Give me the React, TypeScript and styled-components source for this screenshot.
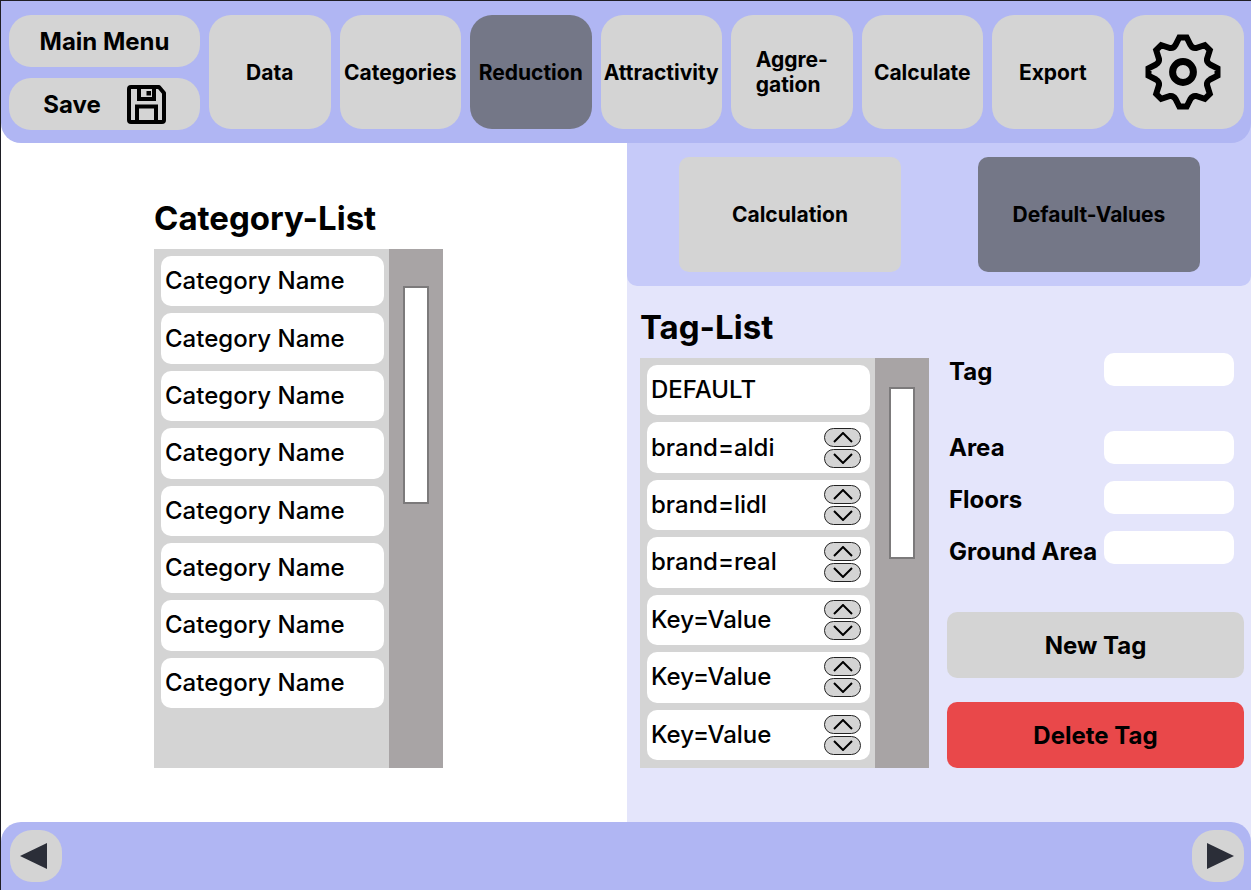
import React from 'react';
import styled, { createGlobalStyle } from 'styled-components';

const color = {
  bar: '#b0b6f3',
  subBar: '#c6caf9',
  panel: '#e4e5fb',
  button: '#d4d4d4',
  active: '#747787',
  track: '#a8a4a5',
  danger: '#e9484a',
  frame: '#1e1e24',
};

const GlobalStyle = createGlobalStyle`
  *, *::before, *::after { box-sizing: border-box; }
  body {
    margin: 0;
    font-family: Inter, "Liberation Sans", sans-serif;
    color: #000;
    background: #fff;
  }
  button, input { font: inherit; color: inherit; }
  h2, ul { margin: 0; padding: 0; }
`;

const Page = styled.div`
  display: flex;
  flex-direction: column;
  min-height: 100vh;
  border-top: 1px solid ${color.frame};
  border-left: 1px solid ${color.frame};
`;

const HeaderBack = styled.div`
  background: linear-gradient(90deg, #fff 50%, ${color.subBar} 50%);
`;

const Header = styled.header`
  display: flex;
  align-items: flex-start;
  gap: 9px;
  padding: 14px 7px 13px 8px;
  background: ${color.bar};
  border-radius: 0 0 20px 20px;
`;

const BaseButton = styled.button`
  display: flex;
  align-items: center;
  justify-content: center;
  padding: 0;
  border: 0;
  background: ${color.button};
  font-weight: 700;
  cursor: pointer;
`;

const FileActions = styled.div`
  display: flex;
  flex-direction: column;
  gap: 11px;
  width: 191px;
`;

const FileButton = styled(BaseButton)`
  gap: 26px;
  height: 52px;
  border-radius: 22px;
  font-size: 24px;
`;

const Tabs = styled.nav`
  display: flex;
  flex: 1;
  gap: 9px;
`;

const TabButton = styled(BaseButton)<{ $active?: boolean }>`
  flex: 1 1 0;
  min-width: 0;
  height: 114px;
  border-radius: 22px;
  background: ${(p) => (p.$active ? color.active : color.button)};
  font-size: 21px;
  line-height: 25px;
  text-align: left;
  white-space: pre;
`;

const Main = styled.main`
  display: grid;
  grid-template-columns: minmax(0, 313fr) minmax(0, 312fr);
  flex: 1;
`;

const CategoryPane = styled.section`
  padding: 55px 0 54px 153px;
`;

const TagPane = styled.section`
  display: flex;
  flex-direction: column;
  background: ${color.panel};
`;

const Title = styled.h2`
  font-size: 33px;
  line-height: 40px;
  font-weight: 700;
`;

const ListBox = styled.div<{ $height: number }>`
  display: flex;
  width: 289px;
  height: ${(p) => p.$height}px;
  margin-top: 11px;
  background: ${color.button};
`;

const Items = styled.ul<{ $spare: number }>`
  display: flex;
  flex: 1;
  flex-direction: column;
  gap: 7px;
  padding: 7px 5px ${(p) => p.$spare}px 7px;
  list-style: none;
`;

const Item = styled.li`
  display: flex;
  flex: 1;
  align-items: center;
  justify-content: space-between;
  padding: 0 9px 0 4px;
  background: #fff;
  border-radius: 10px;
  font-size: 24px;
  line-height: 30px;
  font-weight: 500;
`;

const Track = styled.div<{ $top: number }>`
  width: 54px;
  padding: ${(p) => p.$top}px 14px 0;
  background: ${color.track};
`;

const Thumb = styled.div<{ $height: number }>`
  height: ${(p) => p.$height}px;
  background: #fff;
  border: 2px solid #7c7a7b;
`;

const Stepper = styled.div`
  display: flex;
  flex-direction: column;
  gap: 2px;
`;

const StepButton = styled(BaseButton)`
  width: 37px;
  height: 19px;
  border: 1px solid #222;
  border-radius: 10px;
`;

const SubBar = styled.div`
  display: flex;
  justify-content: space-between;
  padding: 14px 51px 14px 52px;
  background: ${color.subBar};
  border-radius: 0 0 10px 10px;
`;

const SubButton = styled(BaseButton)<{ $active?: boolean }>`
  width: 222px;
  height: 115px;
  border-radius: 10px;
  background: ${(p) => (p.$active ? color.active : color.button)};
  font-size: 21px;
`;

const Editor = styled.div`
  display: flex;
  justify-content: space-between;
  padding: 21px 7px 54px 13px;
`;

const Details = styled.form`
  display: flex;
  flex-direction: column;
  justify-content: space-between;
  width: 297px;
  padding-top: 46px;
`;

const Fields = styled.div`
  display: flex;
  justify-content: space-between;
  padding: 0 10px 0 2px;
`;

const Labels = styled.div`
  display: flex;
  flex-direction: column;
  gap: 22px;
  padding-top: 4px;
`;

const Label = styled.label<{ $lead?: boolean }>`
  margin-bottom: ${(p) => (p.$lead ? 24 : 0)}px;
  font-size: 24px;
  line-height: 30px;
  font-weight: 700;
  white-space: nowrap;
`;

const Inputs = styled.div`
  display: flex;
  flex-direction: column;
  gap: 17px;
`;

const Input = styled.input<{ $lead?: boolean }>`
  width: 130px;
  height: 33px;
  margin-bottom: ${(p) => (p.$lead ? 28 : 0)}px;
  padding: 0 8px;
  border: 0;
  border-radius: 10px;
  background: #fff;
  font-size: 21px;
`;

const Actions = styled.div`
  display: flex;
  flex-direction: column;
  gap: 24px;
`;

const ActionButton = styled(BaseButton)<{ $danger?: boolean }>`
  height: 66px;
  border-radius: 10px;
  background: ${(p) => (p.$danger ? color.danger : color.button)};
  font-size: 24px;
`;

const FooterBack = styled.div`
  background: linear-gradient(90deg, #fff 50%, ${color.panel} 50%);
`;

const Footer = styled.footer`
  display: flex;
  justify-content: space-between;
  padding: 8px 7px 8px 9px;
  background: ${color.bar};
  border-radius: 20px 20px 0 0;
`;

const PageButton = styled(BaseButton)`
  width: 52px;
  height: 52px;
  border-radius: 22px;
`;

const SaveIcon = () => (
  <svg width="39" height="39" viewBox="0 0 39 39" fill="none" stroke="#000" strokeWidth="4" aria-hidden="true">
    <path d="M4 2H32L37 8V35a2 2 0 0 1-2 2H4a2 2 0 0 1-2-2V4a2 2 0 0 1 2-2Z" strokeLinejoin="round" />
    <path d="M12 2V14H27V2" />
    <path d="M10 37V21.500H29V37" />
    <rect x="19.500" y="6" width="4.500" height="4.500" fill="#000" stroke="none" />
  </svg>
);

const GearIcon = () => (
  <svg width="76" height="76" viewBox="-38 -38 76 76" fill="none" stroke="#000" aria-hidden="true">
    <path
      strokeWidth="6"
      d="M-3.700-34.500L-7.500-27Q-9.500-23.500-13-24L-21.800-26.800L-26.800-21.800L-24-13Q-23.500-9.500-27-7.500L-34.500-3.700L-34.500 3.700L-27 7.500Q-23.500 9.500-24 13L-26.800 21.800L-21.800 26.800L-13 24Q-9.500 23.500-7.500 27L-3.700 34.500L3.700 34.500L7.500 27Q9.500 23.500 13 24L21.800 26.800L26.800 21.800L24 13Q23.500 9.500 27 7.500L34.500 3.700L34.500-3.700L27-7.500Q23.500-9.500 24-13L26.800-21.800L21.800-26.800L13-24Q9.500-23.500 7.500-27L3.700-34.500Z"
    />
    <circle r="10.400" strokeWidth="7" />
  </svg>
);

const Chevron = ({ down }: { down?: boolean }) => (
  <svg width="20" height="11" viewBox="0 0 20 11" fill="none" stroke="#000" strokeWidth="2" aria-hidden="true">
    <path d={down ? 'M1 1L10 10L19 1' : 'M1 10L10 1L19 10'} />
  </svg>
);

const Triangle = ({ right }: { right?: boolean }) => (
  <svg width="32" height="26" viewBox="0 0 32 26" fill="#2b2e38" aria-hidden="true">
    <path d={right ? 'M5 0V26L32 13Z' : 'M27 0V26L0 13Z'} />
  </svg>
);

const tabs = ['Data', 'Categories', 'Reduction', 'Attractivity', 'Aggre-\ngation', 'Calculate', 'Export'];
const categories = Array.from({ length: 8 }, () => 'Category Name');
const tags = ['DEFAULT', 'brand=aldi', 'brand=lidl', 'brand=real', 'Key=Value', 'Key=Value', 'Key=Value'];
const fields = [
  { id: 'tag', label: 'Tag' },
  { id: 'area', label: 'Area' },
  { id: 'floors', label: 'Floors' },
  { id: 'ground-area', label: 'Ground Area' },
];

export default function App() {
  return (
    <>
      <GlobalStyle />
      <Page>
        <HeaderBack>
          <Header>
            <FileActions>
              <FileButton type="button">Main Menu</FileButton>
              <FileButton type="button">
                Save
                <SaveIcon />
              </FileButton>
            </FileActions>
            <Tabs>
              {tabs.map((tab) => (
                <TabButton key={tab} type="button" $active={tab === 'Reduction'}>
                  {tab}
                </TabButton>
              ))}
              <TabButton type="button" aria-label="Settings">
                <GearIcon />
              </TabButton>
            </Tabs>
          </Header>
        </HeaderBack>

        <Main>
          <CategoryPane>
            <Title>Category-List</Title>
            <ListBox $height={519}>
              <Items $spare={60}>
                {categories.map((name, i) => (
                  <Item key={i}>{name}</Item>
                ))}
              </Items>
              <Track $top={37}>
                <Thumb $height={218} />
              </Track>
            </ListBox>
          </CategoryPane>

          <TagPane>
            <SubBar>
              <SubButton type="button">Calculation</SubButton>
              <SubButton type="button" $active>
                Default-Values
              </SubButton>
            </SubBar>
            <Editor>
              <div>
                <Title>Tag-List</Title>
                <ListBox $height={410}>
                  <Items $spare={8}>
                    {tags.map((tag, i) => (
                      <Item key={i}>
                        {tag}
                        {i > 0 && (
                          <Stepper>
                            <StepButton type="button" aria-label="Move up">
                              <Chevron />
                            </StepButton>
                            <StepButton type="button" aria-label="Move down">
                              <Chevron down />
                            </StepButton>
                          </Stepper>
                        )}
                      </Item>
                    ))}
                  </Items>
                  <Track $top={29}>
                    <Thumb $height={172} />
                  </Track>
                </ListBox>
              </div>
              <Details>
                <Fields>
                  <Labels>
                    {fields.map((f, i) => (
                      <Label key={f.id} htmlFor={f.id} $lead={i === 0}>
                        {f.label}
                      </Label>
                    ))}
                  </Labels>
                  <Inputs>
                    {fields.map((f, i) => (
                      <Input key={f.id} id={f.id} type="text" $lead={i === 0} />
                    ))}
                  </Inputs>
                </Fields>
                <Actions>
                  <ActionButton type="button">New Tag</ActionButton>
                  <ActionButton type="button" $danger>
                    Delete Tag
                  </ActionButton>
                </Actions>
              </Details>
            </Editor>
          </TagPane>
        </Main>

        <FooterBack>
          <Footer>
            <PageButton type="button" aria-label="Previous">
              <Triangle />
            </PageButton>
            <PageButton type="button" aria-label="Next">
              <Triangle right />
            </PageButton>
          </Footer>
        </FooterBack>
      </Page>
    </>
  );
}
